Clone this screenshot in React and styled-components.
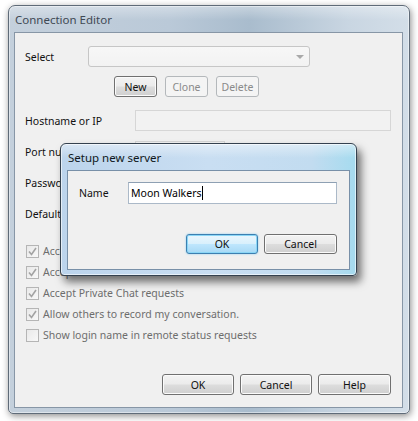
import React from 'react'
import styled, { createGlobalStyle, css } from 'styled-components'

const GlobalStyle = createGlobalStyle`
  html, body { margin: 0; padding: 0; background: #ffffff; }
  body {
    font-family: "Noto Sans", "DejaVu Sans", sans-serif;
    font-size: 10.5px;
    color: #000;
  }
  * { box-sizing: border-box; }
`

const Stage = styled.div`
  position: relative;
  width: 418px;
  height: 421px;
  padding: 5px 0 0 8px;
  overflow: hidden;
`

const Frame = styled.div`
  display: flex;
  flex-direction: column;
  width: 402px;
  height: 409px;
  padding: 0 6px 5px 5px;
  border: 1px solid #5f6b78;
  border-radius: 7px 7px 5px 5px;
  background:
    linear-gradient(180deg, rgba(255,255,255,0.35) 0px, rgba(255,255,255,0) 14px),
    linear-gradient(90deg, #c4d0dc 0%, #bac9d8 40%, #a9bccd 60%, #c9d6e2 85%, #d3dee8 100%);
  box-shadow: 1px 2px 7px rgba(0,0,0,0.45), inset 0 0 0 1px rgba(255,255,255,0.45);
`

const TitleBar = styled.div`
  flex: none;
  display: flex;
  align-items: center;
  height: 26px;
  padding-left: ${p => p.$indent}px;
  font-size: 11.5px;
  color: ${p => (p.$active ? '#101820' : '#3f4954')};
`

const Client = styled.div`
  flex: 1;
  display: flex;
  flex-direction: column;
  border: 1px solid ${p => (p.$active ? '#7890a8' : '#8796a6')};
  background: #f0f0f0;
`

const Body = styled.div`
  flex: 1;
  display: flex;
  flex-direction: column;
  padding: 13px 11px 12px 10px;
`

const Row = styled.div`
  display: flex;
  align-items: center;
  height: 21px;
`

const Label = styled.span`
  flex: none;
  width: ${p => p.$w}px;
  color: #111;
`

const Combo = styled.div`
  position: relative;
  width: 222px;
  height: 21px;
  border: 1px solid #c6c6c6;
  border-radius: 3px;
  background: linear-gradient(#f7f7f7, #f2f2f2);
`

const ComboArrow = styled.span`
  position: absolute;
  right: 5px;
  top: 8px;
  width: 0;
  height: 0;
  border-left: 4px solid transparent;
  border-right: 4px solid transparent;
  border-top: 4px solid #a9a9a9;
`

const ButtonRow = styled.div`
  display: flex;
  gap: ${p => p.$gap}px;
  margin-top: ${p => p.$top || 0}px;
  padding-left: ${p => p.$indent || 0}px;
  justify-content: ${p => (p.$end ? 'flex-end' : 'flex-start')};
`

const Button = styled.button`
  width: ${p => p.$w}px;
  height: ${p => p.$h || 21}px;
  padding: 0;
  font-family: inherit;
  font-size: 10.5px;
  color: #111;
  border: 1px solid #707070;
  border-radius: 3px;
  background: linear-gradient(#f3f3f3 0%, #ebebeb 48%, #dddddd 52%, #cfcfcf 100%);
  box-shadow: inset 0 0 0 1px #fbfbfb;
  ${p => p.disabled && css`
    color: #8a8a8a;
    border-color: #b4b8bb;
    background: #f4f4f4;
    box-shadow: none;
  `}
  ${p => p.$default && css`
    border-color: #3c7fb1;
    background: linear-gradient(#eaf6fd 0%, #d9f0fc 48%, #bee6fd 52%, #a7d9f5 100%);
    box-shadow: inset 0 0 0 1px #8ad6f6, 0 0 2px #7fc8ee;
  `}
`

const FieldStack = styled.div`
  display: flex;
  flex-direction: column;
  gap: 10px;
  margin-top: 13px;
`

const Field = styled.div`
  width: ${p => p.$w}px;
  height: 21px;
  border: 1px solid #d6d6d6;
  background: #f2f2f2;
`

const CheckList = styled.div`
  display: flex;
  flex-direction: column;
  gap: 3px;
  margin-top: 18px;
`

const CheckRow = styled.label`
  display: flex;
  align-items: center;
  gap: 4px;
  height: 18px;
  padding-left: 1px;
  color: #6d6d6d;
`

const Box = styled.span`
  flex: none;
  display: flex;
  align-items: center;
  justify-content: center;
  width: 13px;
  height: 13px;
  border: 1px solid #b5b5b5;
  background: linear-gradient(135deg, #e9e9e9, #f8f8f8);
`

const Footer = styled(ButtonRow)`
  margin-top: auto;
`

const Dialog = styled.div`
  position: absolute;
  left: 60px;
  top: 143px;
  width: 297px;
  height: 133px;
  display: flex;
  flex-direction: column;
  padding: 0 6px 5px 6px;
  border: 1px solid #34414f;
  border-radius: 6px 6px 4px 4px;
  background:
    linear-gradient(180deg, rgba(255,255,255,0.45) 0px, rgba(255,255,255,0) 14px),
    linear-gradient(90deg, #bcd4ec 0%, #c9def2 50%, #c2dcf0 85%, #a5dbef 100%);
  box-shadow: 4px 6px 9px rgba(0,0,0,0.55), inset 0 0 0 1px rgba(255,255,255,0.6);
`

const DialogBody = styled.div`
  flex: 1;
  display: flex;
  flex-direction: column;
  padding: 11px 12px 14px 11px;
`

const TextBox = styled.div`
  display: flex;
  align-items: center;
  width: 210px;
  height: 22px;
  padding-left: 2px;
  border: 1px solid #abb9c8;
  border-top-color: #8ea0b3;
  background: #fff;
  color: #000;
`

const Caret = styled.span`
  width: 1px;
  height: 14px;
  background: #000;
`

function Check({ checked }) {
  return (
    <Box>
      {checked && (
        <svg width="9" height="9" viewBox="0 0 9 9">
          <path d="M1 4.5 L3.5 7.5 L8 1" fill="none" stroke="#a3a3a3" strokeWidth="1.6" />
        </svg>
      )}
    </Box>
  )
}

const options = [
  { text: 'Accept File Transfers', checked: true },
  { text: 'Accept Voice Chat', checked: true },
  { text: 'Accept Private Chat requests', checked: true },
  { text: 'Allow others to record my conversation.', checked: true },
  { text: 'Show login name in remote status requests', checked: false },
]

const fields = [
  { label: 'Hostname or IP', w: 256 },
  { label: 'Port number', w: 90 },
  { label: 'Password', w: 90 },
  { label: 'Default channel', w: 90 },
]

export default function App() {
  return (
    <Stage>
      <GlobalStyle />
      <Frame>
        <TitleBar $indent={1}>Connection Editor</TitleBar>
        <Client>
          <Body>
            <Row>
              <Label $w={63}>Select</Label>
              <Combo><ComboArrow /></Combo>
            </Row>
            <ButtonRow $gap={8} $top={9} $indent={89}>
              <Button $w={43}>New</Button>
              <Button $w={43} disabled>Clone</Button>
              <Button $w={43} disabled>Delete</Button>
            </ButtonRow>
            <FieldStack>
              {fields.map(f => (
                <Row key={f.label}>
                  <Label $w={110}>{f.label}</Label>
                  <Field $w={f.w} />
                </Row>
              ))}
            </FieldStack>
            <CheckList>
              {options.map(o => (
                <CheckRow key={o.text}>
                  <Check checked={o.checked} />
                  {o.text}
                </CheckRow>
              ))}
            </CheckList>
            <Footer $gap={6} $end>
              <Button $w={72}>OK</Button>
              <Button $w={72}>Cancel</Button>
              <Button $w={73}>Help</Button>
            </Footer>
          </Body>
        </Client>
      </Frame>

      <Dialog>
        <TitleBar $indent={1} $active>Setup new server</TitleBar>
        <Client $active>
          <DialogBody>
            <Row>
              <Label $w={49}>Name</Label>
              <TextBox>Moon Walkers<Caret /></TextBox>
            </Row>
            <ButtonRow $gap={6} $top={31} $end>
              <Button $w={72} $h={20} $default>OK</Button>
              <Button $w={73} $h={20}>Cancel</Button>
            </ButtonRow>
          </DialogBody>
        </Client>
      </Dialog>
    </Stage>
  )
}
